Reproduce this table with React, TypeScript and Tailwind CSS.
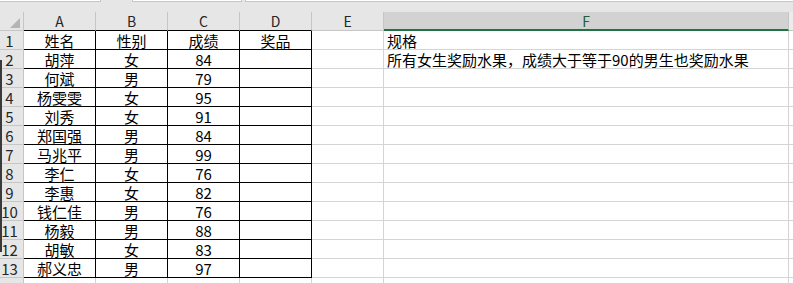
const font = { fontFamily: '"Noto Sans CJK SC", "Liberation Sans", sans-serif' };

type Row = { name: string; sex: string; score: string };

const rows: Row[] = [
  { name: "胡萍", sex: "女", score: "84" },
  { name: "何斌", sex: "男", score: "79" },
  { name: "杨雯雯", sex: "女", score: "95" },
  { name: "刘秀", sex: "女", score: "91" },
  { name: "郑国强", sex: "男", score: "84" },
  { name: "马兆平", sex: "男", score: "99" },
  { name: "李仁", sex: "女", score: "76" },
  { name: "李惠", sex: "女", score: "82" },
  { name: "钱仁佳", sex: "男", score: "76" },
  { name: "杨毅", sex: "男", score: "88" },
  { name: "胡敏", sex: "女", score: "83" },
  { name: "郝义忠", sex: "男", score: "97" },
];

const fNotes: Record<number, string> = {
  1: "规格",
  2: "所有女生奖励水果，成绩大于等于90的男生也奖励水果",
};

function HeaderCell({ label, w, active }: { label: string; w: string; active?: boolean }) {
  return (
    <div
      className={`${w} flex shrink-0 items-center justify-center border-r border-[#c6c6c6] ${
        active
          ? "border-b-2 border-b-[#217346] bg-[#d2d2d2] text-[#1e5f3a]"
          : "border-b border-b-black text-[#262626]"
      }`}
    >
      <span className="text-[14px] leading-none">{label}</span>
    </div>
  );
}

function Cell({
  children,
  w,
  boxed,
  left,
}: {
  children?: React.ReactNode;
  w: string;
  boxed?: boolean;
  left?: boolean;
}) {
  return (
    <div
      className={`${w} flex shrink-0 items-end overflow-visible whitespace-nowrap border-r border-b pb-px ${
        boxed ? "border-black" : "border-[#d4d4d4]"
      } ${left ? "justify-start pl-[3px]" : "justify-center"}`}
    >
      <span className="text-[15px] leading-[14px] text-black">{children}</span>
    </div>
  );
}

export default function App() {
  const body: (string | undefined)[][] = [
    ["姓名", "性别", "成绩", "奖品"],
    ...rows.map((r) => [r.name, r.sex, r.score, ""]),
  ];

  return (
    <div className="relative h-[283px] w-[793px] overflow-hidden bg-white" style={font}>
      {/* formula bar edge */}
      <div className="flex h-[2px] bg-[#e6e6e6]">
        <div className="w-[101px] border-r border-b border-[#c6c6c6] bg-white" />
        <div className="w-[31px]" />
        <div className="w-[110px] border-x border-b border-[#c6c6c6] bg-white" />
        <div className="w-[3px]" />
        <div className="flex-1 border-l border-b border-[#c6c6c6] bg-white" />
      </div>
      <div className="h-[10px] bg-[#e6e6e6]" />

      {/* column headers */}
      <div className="flex h-[19px] bg-[#e6e6e6]">
        <div className="relative w-[24px] shrink-0 border-r border-b border-[#c6c6c6]">
          <svg className="absolute right-[3px] bottom-[2px]" width="10" height="10" viewBox="0 0 10 10">
            <polygon points="10,0 10,10 0,10" fill="#b4b4b4" />
          </svg>
        </div>
        <HeaderCell label="A" w="w-[72px]" />
        <HeaderCell label="B" w="w-[72px]" />
        <HeaderCell label="C" w="w-[72px]" />
        <HeaderCell label="D" w="w-[72px]" />
        <div className="flex w-[72px] shrink-0 items-center justify-center border-r border-b border-[#c6c6c6] text-[#262626]">
          <span className="text-[14px] leading-none">E</span>
        </div>
        <HeaderCell label="F" w="w-[405px]" active />
        <div className="flex-1 border-b border-[#c6c6c6] bg-[#ececec]" />
      </div>

      {/* rows; the 14th is only a sliver at the bottom */}
      {Array.from({ length: 14 }).map((_, i) => {
        const n = i + 1;
        const vals = body[i];
        const boxed = n <= 13;
        return (
          <div key={n} className="flex h-[19px]">
            <div className="flex w-[24px] shrink-0 items-end justify-center border-r border-b border-[#c6c6c6] bg-[#e6e6e6] pr-[4px] pb-px">
              <span className="text-[15px] leading-[14px] text-[#262626]">{n <= 13 ? n : ""}</span>
            </div>
            {[0, 1, 2, 3].map((c) => (
              <Cell key={c} w="w-[72px]" boxed={boxed}>
                {vals?.[c]}
              </Cell>
            ))}
            <Cell w="w-[72px]" />
            <Cell w="w-[405px]" left>
              {fNotes[n]}
            </Cell>
            <div className="flex-1 border-b border-[#d4d4d4]" />
          </div>
        );
      })}

      {/* window shadow on the left edge */}
      <div className="absolute top-[60px] left-0 h-[192px] w-[2px] bg-[#3a3a3a]" />
    </div>
  );
}
